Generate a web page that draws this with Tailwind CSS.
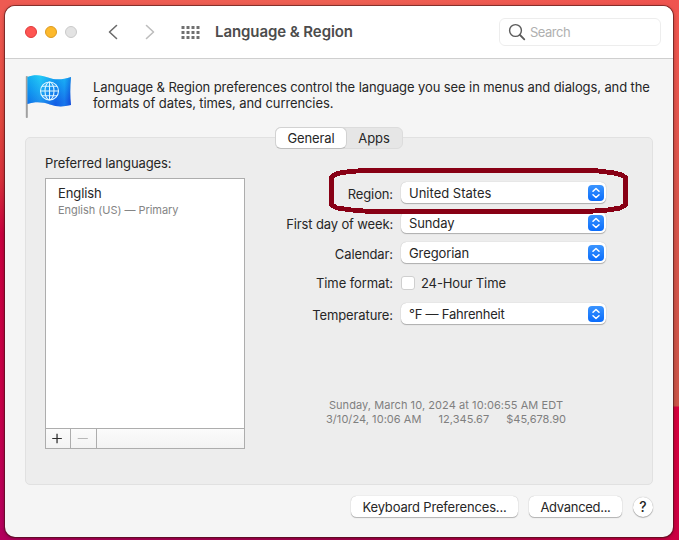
<!DOCTYPE html>
<html lang="en">
<head>
<meta charset="utf-8">
<title>Language &amp; Region</title>
<script src="https://cdn.jsdelivr.net/npm/@tailwindcss/browser@4"></script>
</head>
<body class="w-[679px] h-[540px] overflow-hidden font-['Inter',sans-serif] text-[13px] leading-4 text-[#262626] bg-[linear-gradient(to_bottom,#f25c54_0px,#e2483f_120px,#d8303a_180px,#c9003f_235px,#c80048_400px,#b5005f_540px)]">
<div class="relative w-[679px] h-[540px] pt-[6px] pl-[5px]">
  <div class="absolute right-0 top-0 w-[60px] h-[540px] bg-[linear-gradient(to_bottom,#f2564f_0px,#d9554b_200px,#cb5548_406px,#d6003c_407px,#cc0043_540px)]"></div>
  <div class="absolute left-0 top-0 w-full h-[12px] bg-[linear-gradient(to_right,#ee5a52,#ee6053,#ef534f)]"></div>
  <div class="absolute left-0 bottom-0 w-full h-[12px] bg-[linear-gradient(to_right,#b3005c,#a8004c,#cc0043)]"></div>

  <main class="relative w-[668px] h-[531px] rounded-[10px] bg-[#f5f5f5] overflow-hidden shadow-[0_0_0_1px_rgba(70,20,20,0.55),0_1px_4px_rgba(0,0,0,0.4)]">
    <header class="flex items-center h-[53px] bg-white border-b border-[#cfcfcf] pl-5 pr-3">
      <div class="flex gap-2">
        <i class="size-3 rounded-full bg-[#fe5552] border border-[#e0393b]"></i>
        <i class="size-3 rounded-full bg-[#fdb92c] border border-[#dc9b20]"></i>
        <i class="size-3 rounded-full bg-[#e3e3e3] border border-[#cacaca]"></i>
      </div>
      <svg class="ml-[31px] w-[10px] h-4" viewBox="0 0 10 16" fill="none" stroke="#6b6b6b" stroke-width="1.6" stroke-linecap="round" stroke-linejoin="round"><path d="M8.500 1.500 1.500 8l7 6.500"/></svg>
      <svg class="ml-[27px] w-[10px] h-4" viewBox="0 0 10 16" fill="none" stroke="#bdbdbd" stroke-width="1.6" stroke-linecap="round" stroke-linejoin="round"><path d="M1.500 1.500 8.500 8l-7 6.500"/></svg>
      <svg class="ml-[26px] w-[19px] h-[13px]" viewBox="0 0 19 13" fill="none" stroke="#707070" stroke-width="3"><path stroke-dasharray="3 2" d="M.5 1.500h18M.5 6.500h18M.5 11.500h18"/></svg>
      <h1 class="ml-[15px] text-[15px] leading-5 font-semibold text-[#4c4c4c] whitespace-nowrap"><span class="tracking-[-0.08px]">Language &amp; Region</span></h1>
      <div class="ml-auto flex items-center w-[162px] h-7 rounded-[6px] border border-[#ededed] pl-2">
        <svg class="size-[18px]" viewBox="0 0 18 18" fill="none" stroke="#5b5b5b" stroke-width="1.400" stroke-linecap="round"><circle cx="7.500" cy="7.500" r="5.900"/><path d="m12 12 4.300 4.300" stroke-width="1.800"/></svg>
        <span class="ml-1 text-[#b0b0b0] tracking-[-0.6px]"><span class="tracking-[-0.5px]">Search</span></span>
      </div>
    </header>

    <section class="flex h-[78px] pt-[14px] pl-[19px]">
      <svg class="w-[50px] h-[48px] shrink-0" viewBox="0 0 50 48">
        <defs>
          <linearGradient id="cloth" x1="0" y1="0" x2=".3" y2="1"><stop offset="0" stop-color="#20d2f5"/><stop offset=".5" stop-color="#159af2"/><stop offset="1" stop-color="#1658e4"/></linearGradient>
          <linearGradient id="fold" x1="0" y1="0" x2="1" y2="0"><stop offset="0" stop-color="#0078e8" stop-opacity=".4"/><stop offset=".3" stop-color="#2cd0f8" stop-opacity=".4"/><stop offset=".65" stop-color="#0b6ce8" stop-opacity=".35"/><stop offset=".85" stop-color="#1cb0f8" stop-opacity=".35"/><stop offset="1" stop-color="#0838cc" stop-opacity=".4"/></linearGradient>
        </defs>
        <rect x="1.800" y="3" width="2" height="42" rx=".8" fill="#a0a0a0"/>
        <path fill="url(#cloth)" d="M3.500 4C10 1 18 2 24 4.500c8 3 15 2 23-.5C46 14 46 24 47 32c-8 2-14 2-21-.5C19 29 11 28.500 3.500 31Z"/>
        <path fill="url(#fold)" d="M3.500 4C10 1 18 2 24 4.500c8 3 15 2 23-.5C46 14 46 24 47 32c-8 2-14 2-21-.5C19 29 11 28.500 3.500 31Z"/>
        <g fill="none" stroke="#dcf5ff" stroke-width="1.100"><circle cx="25.500" cy="18" r="9"/><ellipse cx="25.500" cy="18" rx="4.500" ry="9"/><path d="M25.500 9v18M16.500 18h18M18 13.200h15M18 22.800h15"/></g>
      </svg>
      <p class="ml-[19px] mt-[6px] whitespace-nowrap tracking-[-0.1px]">Language &amp; Region preferences control the language you see in menus and dialogs, and the<br>formats of dates, times, and currencies.</p>
    </section>

    <section class="relative ml-5 w-[628px] h-[348px] rounded-[5px] border border-[#e1e1e1] bg-[#ededed] flex">
      <nav class="absolute left-[249px] -top-[11px] flex w-[128px] h-[22px] rounded-[6px] bg-[#e6e6e6] border border-[#dcdcdc]">
        <span class="-ml-px -mt-px w-[72px] h-[22px] rounded-[6px] bg-white border border-[#d2d2d2] border-b-[#bdbdbd] text-center leading-5 tracking-[-0.1px]">General</span>
        <span class="w-[54px] text-center leading-5 tracking-[-0.1px]">Apps</span>
      </nav>

      <div class="ml-[19px] w-[200px] pt-[17px]">
        <h2 class="mb-[7px] tracking-[-0.12px]">Preferred languages:</h2>
        <div class="h-[271px] border border-[#adadad] bg-white flex flex-col">
          <div class="flex-1 pl-3 pt-[6px]">
            <p class="tracking-[-0.1px]">English</p>
            <p class="text-[11px] text-[#858585] mt-px whitespace-nowrap tracking-[-0.04px]">English (US) — Primary</p>
          </div>
          <div class="h-[20px] border-t border-[#adadad] bg-linear-to-b from-[#fbfbfb] to-[#f3f3f3] flex">
            <svg class="w-[25px] h-[19px] border-r border-[#adadad]" viewBox="0 0 25 19" stroke="#2d2d2d" stroke-width="1.300"><path d="M6.500 9.500h10M11.500 4.500v10"/></svg>
            <svg class="w-[26px] h-[19px] border-r border-[#adadad]" viewBox="0 0 26 19" stroke="#b5b5b5"><path d="M7 9.500h10.500"/></svg>
          </div>
        </div>
      </div>

      <div class="w-[362px] pt-[44px]">
        <div class="flex items-center h-[21px]"><span class="w-[148px] text-right pt-[2px] whitespace-nowrap tracking-[-0.12px]">Region:</span><span class="ml-2 flex items-center justify-between w-[205px] h-[21px] rounded-[5.500px] bg-white pl-2 pr-[2px] shadow-[0_0_1px_rgba(0,0,0,0.25),0_1px_1px_rgba(0,0,0,0.25)]"><span>United States</span><svg class="size-4" viewBox="0 0 16 16"><use href="#stepper"/></svg></span></div>
        <div class="mt-[9px] flex items-center h-[21px]"><span class="w-[148px] text-right pt-[2px] whitespace-nowrap tracking-[-0.14px]">First day of week:</span><span class="ml-2 flex items-center justify-between w-[205px] h-[21px] rounded-[5.500px] bg-white pl-2 pr-[2px] shadow-[0_0_1px_rgba(0,0,0,0.25),0_1px_1px_rgba(0,0,0,0.25)]"><span class="tracking-[-0.12px]">Sunday</span><svg class="size-4" viewBox="0 0 16 16"><use href="#stepper"/></svg></span></div>
        <div class="mt-[9px] flex items-center h-[21px]"><span class="w-[148px] text-right pt-[2px] whitespace-nowrap tracking-[-0.1px]">Calendar:</span><span class="ml-2 flex items-center justify-between w-[205px] h-[21px] rounded-[5.500px] bg-white pl-2 pr-[2px] shadow-[0_0_1px_rgba(0,0,0,0.25),0_1px_1px_rgba(0,0,0,0.25)]"><span class="tracking-[-0.1px]">Gregorian</span><svg class="size-4" viewBox="0 0 16 16"><use href="#stepper"/></svg></span></div>
        <div class="mt-[9px] flex items-center h-[22px]"><span class="w-[148px] text-right whitespace-nowrap tracking-[-0.1px]">Time format:</span><i class="ml-2 size-[14px] rounded-[3px] bg-white border border-[#cfcfcf]"></i><span class="ml-[6px] tracking-[-0.12px]">24-Hour Time</span></div>
        <div class="mt-[9px] flex items-center h-[21px]"><span class="w-[148px] text-right pt-[2px] whitespace-nowrap tracking-[-0.1px]">Temperature:</span><span class="ml-2 flex items-center justify-between w-[205px] h-[21px] rounded-[5.500px] bg-white pl-2 pr-[2px] shadow-[0_0_1px_rgba(0,0,0,0.25),0_1px_1px_rgba(0,0,0,0.25)]"><span class="tracking-[-0.22px]">°F — Fahrenheit</span><svg class="size-4" viewBox="0 0 16 16"><use href="#stepper"/></svg></span></div>
        <div class="mt-[74px] ml-[81px] w-[240px] text-[11px] leading-[14px] text-[#7f7f7f] whitespace-nowrap">
          <p class="text-center tracking-[0.07px]">Sunday, March 10, 2024 at 10:06:55 AM EDT</p>
          <p class="flex justify-between"><span class="tracking-[0.05px]">3/10/24, 10:06 AM</span><span class="tracking-[0.05px]">12,345.67</span><span>$45,678.90</span></p>
        </div>
      </div>
    </section>

    <footer class="flex justify-end gap-[11px] pt-[11px] pr-5">
      <button class="w-[167px] h-[21px] rounded-[5.500px] bg-white leading-5 whitespace-nowrap tracking-[-0.17px] shadow-[0_0_1px_rgba(0,0,0,0.3),0_1px_1px_rgba(0,0,0,0.25)]">Keyboard Preferences...</button>
      <button class="w-[93px] h-[21px] rounded-[5.500px] bg-white leading-5 whitespace-nowrap tracking-[-0.3px] shadow-[0_0_1px_rgba(0,0,0,0.3),0_1px_1px_rgba(0,0,0,0.25)]">Advanced...</button>
      <button class="size-[20px] mt-px rounded-full bg-white text-[14px] font-medium leading-5 shadow-[0_0_1px_rgba(0,0,0,0.35),0_1px_1px_rgba(0,0,0,0.25)]">?</button>
    </footer>
  </main>

  <svg class="absolute left-0 top-0 w-[679px] h-[540px] pointer-events-none" viewBox="0 0 679 540">
    <defs>
      <linearGradient id="blue" x1="0" y1="0" x2="0" y2="1"><stop offset="0" stop-color="#3a94ff"/><stop offset="1" stop-color="#0a6cfb"/></linearGradient>
      <g id="stepper"><rect width="16" height="16" rx="4" fill="url(#blue)"/><path d="m5 6.300 3-2.800 3 2.800M5 9.700l3 2.800 3-2.800" fill="none" stroke="#fff" stroke-width="1.500" stroke-linecap="round" stroke-linejoin="round"/></g>
    </defs>
    <path shape-rendering="crispEdges" d="M362 170.500H594L603 171.500 614 173 622 175 625.500 177.500V205L620 208 608 210 587 211.500H370L352 210 337 208 331.500 205V177L337 173.500 346 172Z" fill="none" stroke="#880015" stroke-width="4.800" stroke-linejoin="round"/>
  </svg>
</div>
</body>
</html>
